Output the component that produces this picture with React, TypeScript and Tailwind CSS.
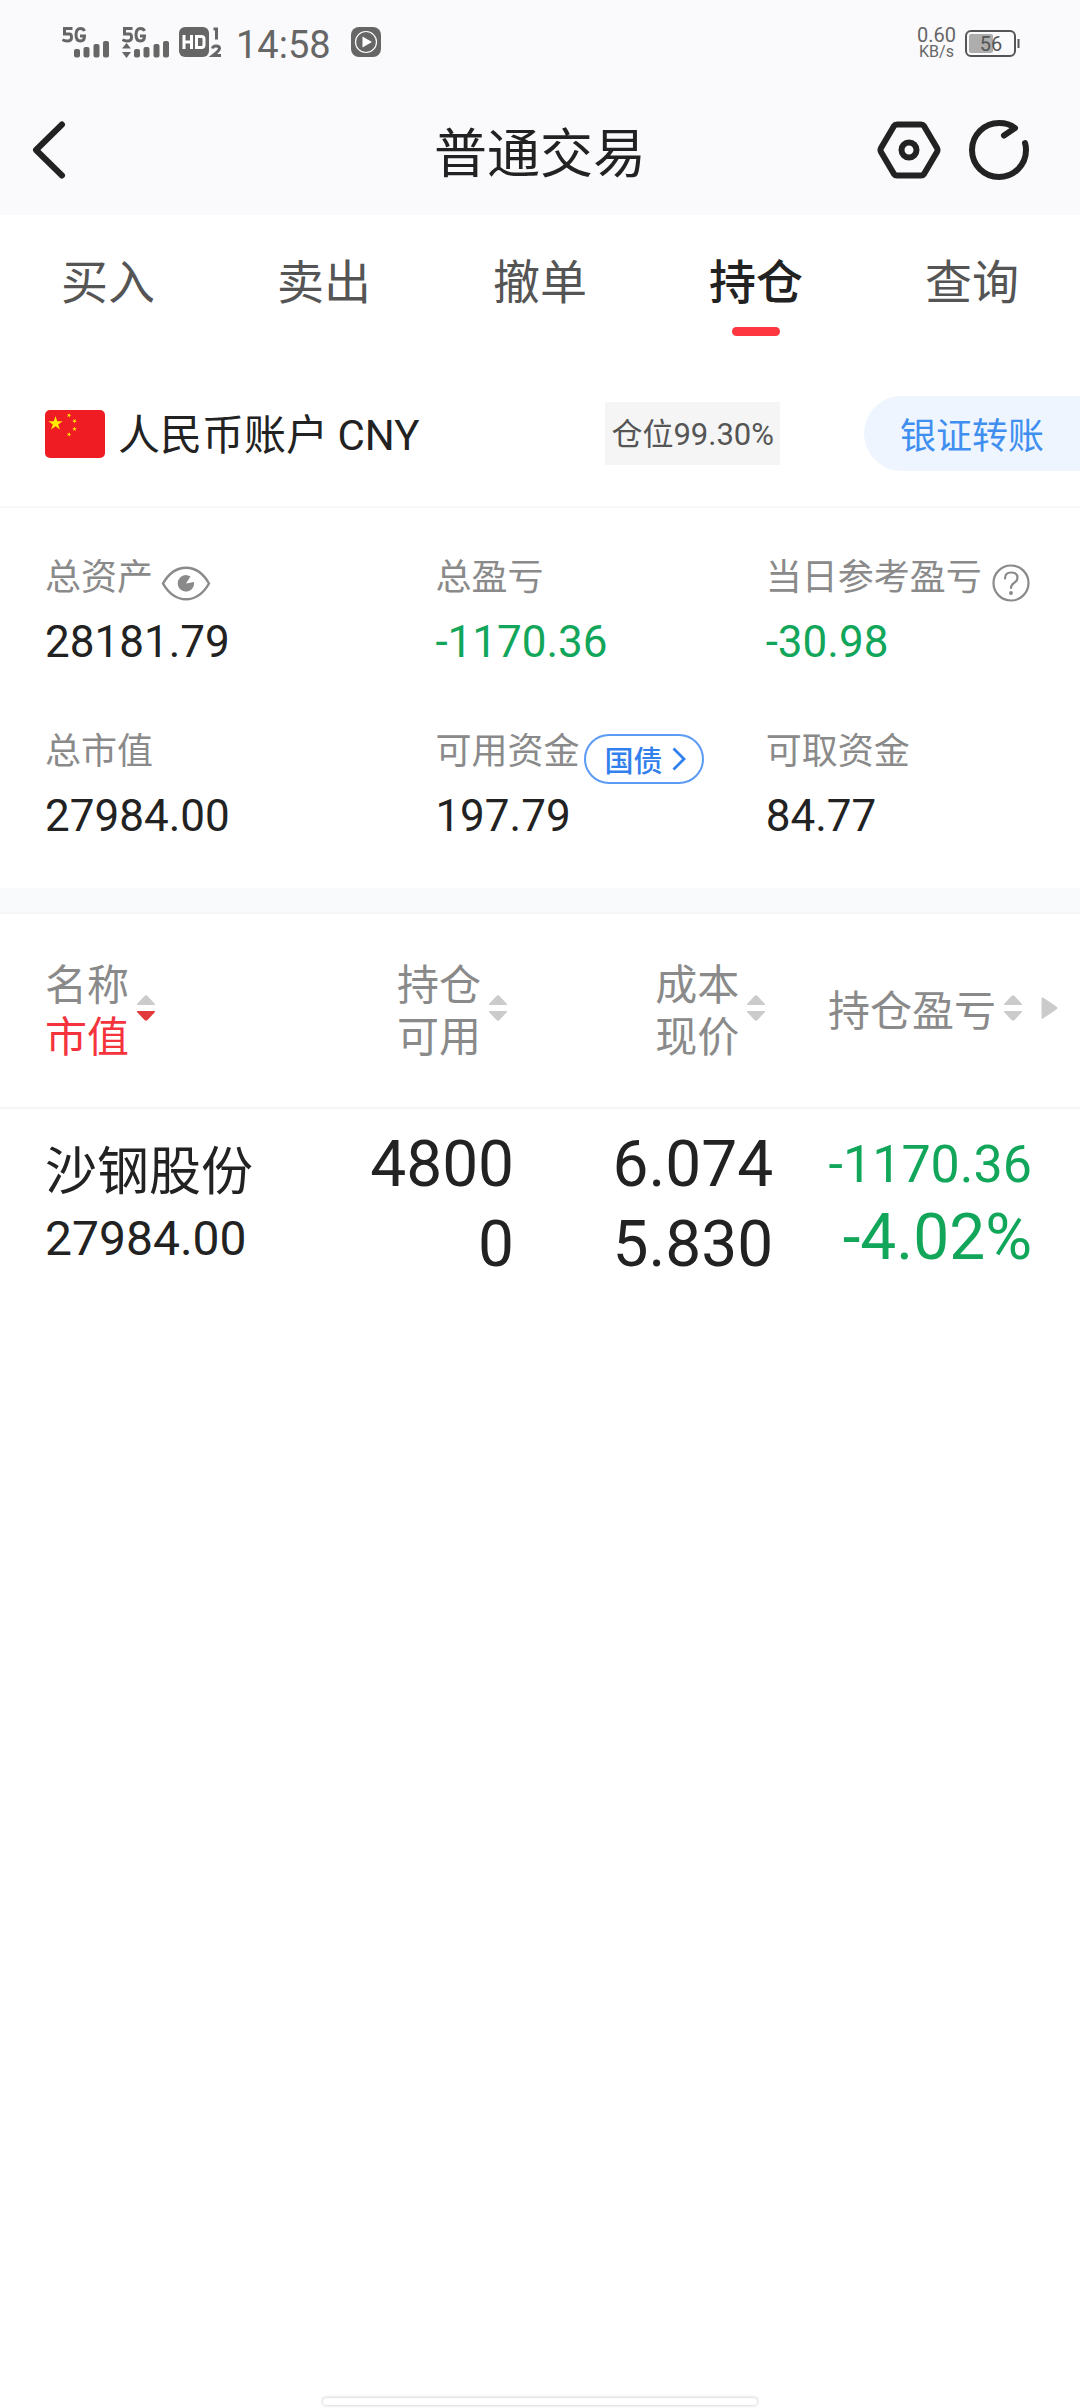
import React from 'react';

const TABS = ['买入', '卖出', '撤单', '持仓', '查询'];

function SignalBars({ data = false }: { data?: boolean }) {
  return (
    <svg viewBox="0 0 48 32" className="h-8 w-12" fill="#666666" aria-hidden="true">
      <g fill="none" stroke="#666666" strokeWidth="3">
        <path d="M10.500 1.500H2.500V7H7.500Q9.500 7 9.500 10.500Q9.500 14 5 14Q2 14 0.500 12.500" />
        <path d="M22.500 4Q21.500 1.500 18.500 1.500Q14 1.500 14 7.700Q14 14 18.500 14Q22.500 14 22.500 9H18" />
      </g>
      {data && <path d="M0 21.500L4.500 16L9 21.500ZM0 25H9L4.500 31Z" />}
      <rect x="12" y="22" width="6" height="8.500" rx="2" />
      <rect x="21.500" y="20" width="6" height="10.500" rx="2" />
      <rect x="31.500" y="17" width="6" height="13.500" rx="2" />
      <rect x="41" y="14" width="6" height="16.500" rx="2" />
    </svg>
  );
}

function StatusBar() {
  return (
    <div className="flex h-24 items-start justify-between pt-[27px] pr-[60px] pl-[62px] font-[Roboto,sans-serif] text-[#666666]">
      <div className="flex items-start">
        <SignalBars />
        <div className="ml-3">
          <SignalBars data />
        </div>
        <svg viewBox="0 0 43 32" className="ml-[9px] h-8 w-[43px]" aria-label="HD">
          <rect width="30" height="30" rx="6" fill="#666666" />
          <path d="M5 8V22M12.500 8V22M5 15H12" stroke="#fff" strokeWidth="3" fill="none" />
          <path d="M17.500 9.500H22.500Q25 9.500 25 12V18Q25 20.500 22.500 20.500H17.500Z" stroke="#fff" strokeWidth="3" fill="none" />
          <path d="M34.500 2H37.500V12.500" stroke="#666666" strokeWidth="3" fill="none" />
          <path d="M33.500 21.500Q34 19 37 19Q40.500 19 40.500 21.500Q40.500 23.500 34 28.500H42" stroke="#666666" strokeWidth="3" fill="none" />
        </svg>
        <span className="ml-[14px] text-[38px] leading-9">14:58</span>
        <svg viewBox="0 0 30 32" className="ml-5 h-8 w-[30px]" aria-hidden="true">
          <rect width="30" height="30" rx="8" fill="#666666" />
          <circle cx="15" cy="15" r="10.500" fill="none" stroke="#fff" strokeWidth="1.200" />
          <path d="M11.500 9.500L21 15L11.500 20.500Z" fill="#fff" />
        </svg>
      </div>
      <div className="flex items-start gap-[9px]">
        <div className="text-center">
          <div className="text-xl leading-4">0.60</div>
          <div className="text-base leading-[18px]">KB/s</div>
        </div>
        <svg viewBox="0 0 55 32" className="h-8 w-[55px]" role="img" aria-label="56%">
          <rect x="1" y="4" width="49" height="25" rx="5" fill="none" stroke="#555555" strokeWidth="2" />
          <rect x="4" y="7" width="24" height="19" rx="2" fill="#adadad" />
          <rect x="52.500" y="12" width="2" height="9" fill="#555555" />
          <text x="26" y="24" textAnchor="middle" fontSize="20" fill="#555555">56</text>
        </svg>
      </div>
    </div>
  );
}

function TitleBar() {
  return (
    <div className="grid h-[119px] grid-cols-[1fr_auto_1fr] items-center px-8 pb-[11px] text-[#222222]">
      <button aria-label="返回" className="justify-self-start">
        <svg viewBox="0 0 34 58" className="h-[58px] w-[34px]" fill="none" stroke="currentColor" strokeWidth="6" strokeLinecap="round" strokeLinejoin="round">
          <path d="M30 3.500L4 29L30 54.500" />
        </svg>
      </button>
      <h1 className="text-[53px] leading-[76px]">普通交易</h1>
      <div className="flex items-center gap-[27px] justify-self-end pr-[18px]">
        <button aria-label="设置">
          <svg viewBox="0 0 64 60" className="h-[60px] w-16" fill="none" stroke="currentColor" strokeWidth="6" strokeLinejoin="round">
            <path d="M20 4.500H44Q46 4.500 47 6L60 28Q61 30 60 32L47 54Q46 55.500 44 55.500H20Q18 55.500 17 54L4 32Q3 30 4 28L17 6Q18 4.500 20 4.500Z" />
            <circle cx="32" cy="30" r="7.500" />
          </svg>
        </button>
        <button aria-label="刷新">
          <svg viewBox="0 0 62 62" className="size-[62px]" fill="none" stroke="currentColor" strokeWidth="6" strokeLinecap="round" strokeLinejoin="round">
            <path d="M57 24Q58 27 58 31A27 27 0 1 1 31 4Q41 4 47 9L36 16.500" />
          </svg>
        </button>
      </div>
    </div>
  );
}

function Tabs() {
  return (
    <nav className="grid grid-cols-5 pt-8">
      {TABS.map((t) => {
        const on = t === '持仓';
        return (
          <button key={t} className="flex flex-col items-center gap-4" aria-current={on ? 'page' : undefined}>
            <span className={on ? 'text-[47px] leading-[64px] font-medium text-[#222222]' : 'text-[47px] leading-[64px] text-[#555555]'}>{t}</span>
            <span className={on ? 'h-[9px] w-12 rounded-full bg-[#fd363f]' : 'h-[9px] w-12'} />
          </button>
        );
      })}
    </nav>
  );
}

function Flag() {
  const star = 'M0 -10L2.250 -3.090L9.510 -3.090L3.630 1.180L5.880 8.090L0 3.820L-5.880 8.090L-3.630 1.180L-9.510 -3.090L-2.250 -3.090Z';
  return (
    <svg viewBox="0 0 60 48" className="h-12 w-[60px]" aria-hidden="true">
      <rect width="60" height="48" rx="5" fill="#ef1c24" />
      <g fill="#ffec00">
        <path d={star} transform="translate(10.500 13.500) scale(.75)" />
        <path d={star} transform="translate(24 5.500) scale(.24) rotate(20)" />
        <path d={star} transform="translate(29.500 11) scale(.24) rotate(40)" />
        <path d={star} transform="translate(29.500 19) scale(.24)" />
        <path d={star} transform="translate(24 24.500) scale(.24) rotate(20)" />
      </g>
    </svg>
  );
}

function Account() {
  return (
    <section className="flex items-center border-b-2 border-[#f8f8f8] pt-[60px] pb-[35px] pl-[45px]">
      <div className="flex flex-1 items-center gap-[13px]">
        <Flag />
        <span className="text-[42px] leading-[60px] text-[#222222]">
          人民币账户 <span className="font-[Roboto,sans-serif]">CNY</span>
        </span>
      </div>
      <span className="bg-[#f5f5f5] px-[6px] text-[31px] leading-[60px] text-[#555555]">
        仓位<span className="font-[Roboto,sans-serif]">99.30%</span>
      </span>
      <div className="flex w-[300px] justify-end">
        <button className="w-[216px] rounded-l-full bg-[#eef5fe] px-[36px] text-left text-[36px] leading-[75px] text-[#408ff0]">银证转账</button>
      </div>
    </section>
  );
}

type StatProps = { label: string; value: string; green?: boolean; children?: React.ReactNode };

function Stat({ label, value, green, children }: StatProps) {
  return (
    <div>
      <dt className="flex h-16 items-start text-[36px] leading-[52px] text-[#8a8a8a]">
        {label}
        {children}
      </dt>
      <dd className={green ? 'font-[Roboto,sans-serif] text-[44px] leading-[60px] text-[#12a65a]' : 'font-[Roboto,sans-serif] text-[44px] leading-[60px] text-[#222222]'}>{value}</dd>
    </div>
  );
}

function Summary() {
  return (
    <dl className="grid grid-cols-[390fr_330fr_314fr] gap-y-[50px] pt-10 pb-[42px] pl-[45px] whitespace-nowrap">
      <Stat label="总资产" value="28181.79">
        <button aria-label="隐藏金额" className="mt-[18px] ml-2">
          <svg viewBox="0 0 50 36" className="h-9 w-[50px]" fill="none" stroke="#8a8a8a" strokeWidth="2.500">
            <path d="M2 17.500C14 -3.500 36 -3.500 48 17.500C36 38.500 14 38.500 2 17.500Z" strokeLinejoin="round" />
            <path d="M25 17.500L29.500 10.500A8.200 8.200 0 1 0 33 16Z" fill="#8a8a8a" stroke="none" />
          </svg>
        </button>
      </Stat>
      <Stat label="总盈亏" value="-1170.36" green />
      <Stat label="当日参考盈亏" value="-30.98" green>
        <button aria-label="说明" className="mt-4 ml-[10px]">
          <svg viewBox="0 0 38 38" className="size-[38px]" fill="none" stroke="#8a8a8a" strokeWidth="2.200" strokeLinecap="round">
            <circle cx="19" cy="19" r="17.500" />
            <path d="M13 14.500Q13 8.500 19 8.500Q25.500 8.500 25.500 14Q25.500 17 22 19Q19 21 19 24" />
            <circle cx="19" cy="29" r="1.200" fill="#8a8a8a" strokeWidth="1.500" />
          </svg>
        </button>
      </Stat>
      <Stat label="总市值" value="27984.00" />
      <Stat label="可用资金" value="197.79">
        <button className="mt-3 ml-[5px] flex h-[50px] w-[120px] items-center gap-[10px] rounded-full border-2 border-[#5b9bf3] pl-[18px] text-[29px] font-medium text-[#3180ee]">
          国债
          <svg viewBox="0 0 14 24" className="h-6 w-[14px]" fill="none" stroke="currentColor" strokeWidth="2.800">
            <path d="M1.500 1.500L12 12L1.500 22.500" />
          </svg>
        </button>
      </Stat>
      <Stat label="可取资金" value="84.77" />
    </dl>
  );
}

function Sort({ down = false }: { down?: boolean }) {
  return (
    <svg viewBox="0 0 18 26" className="h-[26px] w-[18px] shrink-0" aria-hidden="true">
      <path d="M0.500 10Q-0.500 9.500 0.500 8.500L7.500 1Q9 -0.500 10.500 1L17.500 8.500Q18.500 9.500 17.500 10Z" fill="#cbcbcb" />
      <path d="M0.500 16Q-0.500 16.500 0.500 17.500L7.500 25Q9 26.500 10.500 25L17.500 17.500Q18.500 16.500 17.500 16Z" fill={down ? '#e23a3a' : '#cbcbcb'} />
    </svg>
  );
}

function Holdings() {
  return (
    <table className="w-full table-fixed whitespace-nowrap">
      <colgroup>
        <col className="w-[31.5%]" />
        <col className="w-[16.1%]" />
        <col className="w-[24%]" />
        <col />
      </colgroup>
      <thead className="border-y-2 border-[#f5f5f5] text-[42px] leading-[52px] text-[#8a8a8a]">
        <tr>
          <th className="pt-[42px] pb-[47px] pl-[45px] font-normal">
            <button className="flex items-center gap-2 text-left">
              <span>名称<br /><span className="text-[#f5333c]">市值</span></span>
              <Sort down />
            </button>
          </th>
          <th className="pt-[42px] pr-[7px] pb-[47px] font-normal">
            <button className="ml-auto flex items-center gap-2 text-right">
              <span>持仓<br />可用</span>
              <Sort />
            </button>
          </th>
          <th className="pt-[42px] pr-2 pb-[47px] font-normal">
            <button className="ml-auto flex items-center gap-2 text-right">
              <span>成本<br />现价</span>
              <Sort />
            </button>
          </th>
          <th className="pt-[42px] pr-[22px] pb-[47px] font-normal">
            <div className="flex items-center justify-end gap-[19px]">
              <button className="flex items-center gap-2">
                持仓盈亏
                <Sort />
              </button>
              <button aria-label="更多列">
                <svg viewBox="0 0 17 22" className="h-[22px] w-[17px]" fill="#cbcbcb">
                  <path d="M0.500 1.500Q0.500 0 2 0.500L16 10Q17 11 16 12L2 21.500Q0.500 22 0.500 20.500Z" />
                </svg>
              </button>
            </div>
          </th>
        </tr>
      </thead>
      <tbody className="text-[#222222]">
        <tr>
          <td className="pt-4 pl-[45px]">
            <div className="text-[52px] leading-[68px]">沙钢股份</div>
            <div className="font-[Roboto,sans-serif] text-[48px] leading-[74px]">27984.00</div>
          </td>
          <td className="pt-4 text-right font-[Roboto,sans-serif] text-[64px] leading-[80px]">
            <div>4800</div>
            <div>0</div>
          </td>
          <td className="pt-4 text-right font-[Roboto,sans-serif] text-[64px] leading-[80px]">
            <div>6.074</div>
            <div>5.830</div>
          </td>
          <td className="pt-4 pr-[48px] pb-2 text-right font-[Roboto,sans-serif] leading-[73px] text-[#12a65a]">
            <div className="text-[52px] leading-[73px]">-1170.36</div>
            <div className="text-[64px] leading-[73px]">-4.02%</div>
          </td>
        </tr>
      </tbody>
    </table>
  );
}

export default function App() {
  return (
    <div className="flex min-h-screen flex-col bg-white font-['Noto_Sans_CJK_SC',sans-serif]">
      <header className="bg-[#fafafc]">
        <StatusBar />
        <TitleBar />
      </header>
      <main>
        <Tabs />
        <Account />
        <Summary />
        <div className="h-6 bg-[#f9fafc]" />
        <Holdings />
      </main>
      <div className="mx-auto mt-auto mb-[3px] h-[7px] w-[434px] rounded-full bg-white shadow-[0_0_3px_1px_#d8d8d8]" />
    </div>
  );
}
